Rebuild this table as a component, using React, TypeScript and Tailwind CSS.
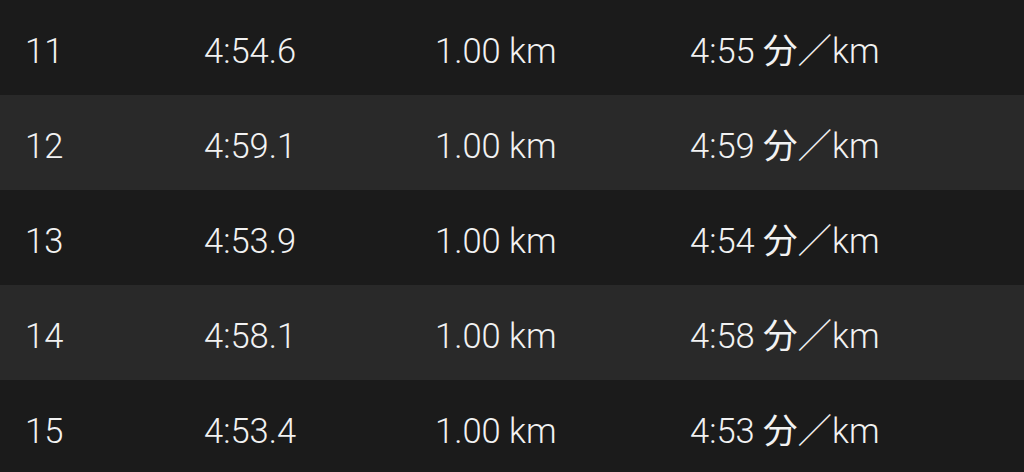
const laps = [
	{ lap: "11", time: "4:54.6", dist: "1.00 km", pace: "4:55" },
	{ lap: "12", time: "4:59.1", dist: "1.00 km", pace: "4:59" },
	{ lap: "13", time: "4:53.9", dist: "1.00 km", pace: "4:54" },
	{ lap: "14", time: "4:58.1", dist: "1.00 km", pace: "4:58" },
	{ lap: "15", time: "4:53.4", dist: "1.00 km", pace: "4:53" },
];

const App = () => {
	return (
		<div
			className="flex flex-col w-[1024px] h-[472px] overflow-hidden bg-[#1b1b1b] pt-px"
			style={{ fontFamily: "Roboto, 'Noto Sans CJK JP', sans-serif" }}
		>
			<div className="h-px bg-[#2a2a2a] -mt-px" />
			{laps.map((l, i) => (
				<div
					key={l.lap}
					className={`flex items-center h-[95px] shrink-0 pt-[7px] text-[34.5px] leading-[40px] font-light text-[#f2f2f2] ${
						i % 2 === 1 ? "bg-[#292929]" : "bg-[#1b1b1b]"
					}`}
				>
					<div className="w-[204px] pl-[25px]">{l.lap}</div>
					<div className="w-[231px]">{l.time}</div>
					<div className="w-[255px]">{l.dist}</div>
					<div>
						{l.pace} <span className="font-normal">分</span>／km
					</div>
				</div>
			))}
		</div>
	);
};

export default App;
